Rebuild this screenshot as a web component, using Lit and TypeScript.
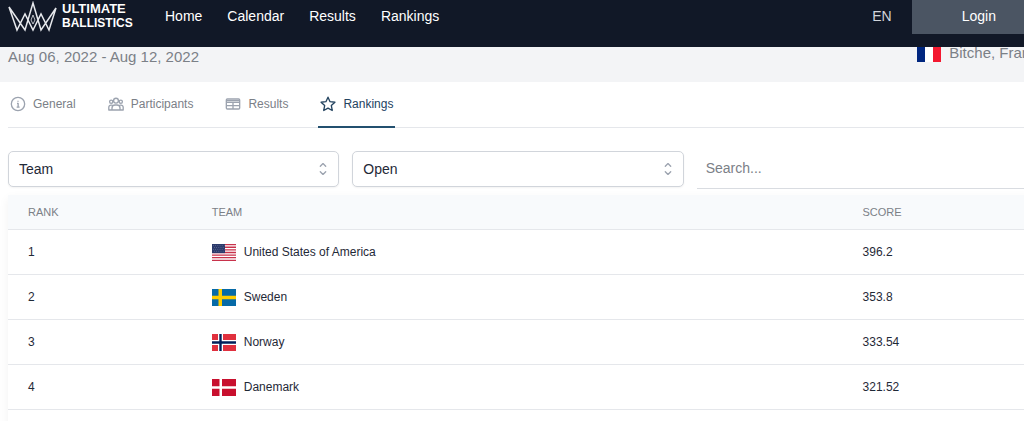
import { LitElement, html, css, svg } from "lit";
import { customElement, property } from "lit/decorators.js";

type Row = { rank: number; code: string; team: string; score: string };

const ROWS: Row[] = [
  { rank: 1, code: "us", team: "United States of America", score: "396.2" },
  { rank: 2, code: "se", team: "Sweden", score: "353.8" },
  { rank: 3, code: "no", team: "Norway", score: "333.54" },
  { rank: 4, code: "dk", team: "Danemark", score: "321.52" },
];

const FLAGS: Record<string, unknown> = {
  fr: svg`<path fill="#fff" d="M0 0h24v17H0z"/><path fill="#00267f" d="M0 0h8v17H0z"/><path fill="#f31830" d="M16 0h8v17h-8z"/>`,
  us: svg`<path fill="#fff" d="M0 0h24v17H0z"/>
    <path stroke="#c8324b" stroke-width="1.3" d="M0 .65h24M0 3.27h24M0 5.88h24M0 8.5h24M0 11.1h24M0 13.7h24M0 16.35h24"/>
    <path fill="#2b3a6b" d="M0 0h13v9.1H0z"/>
    <path stroke="#8f99b8" stroke-width=".5" stroke-dasharray=".8 1.4" d="M1 1.6h11.5M2 3.5h10M1 5.4h11.5M2 7.3h10"/>`,
  se: svg`<path fill="#066aa7" d="M0 0h24v17H0z"/><path fill="#fecc00" d="M6.5 0h3.5v17H6.5zM0 6.8h24v3.4H0z"/>`,
  no: svg`<path fill="#e0303e" d="M0 0h24v17H0z"/><path fill="#fff" d="M6 0h5v17H6zM0 6h24v5H0z"/><path fill="#00205b" d="M7.3 0h2.4v17H7.3zM0 7.3h24v2.4H0z"/>`,
  dk: svg`<path fill="#c8102e" d="M0 0h24v17H0z"/><path fill="#fff" d="M7.5 0h2.5v17H7.5zM0 7.2h24v2.5H0z"/>`,
};

const ICONS: Record<string, unknown> = {
  General: svg`<circle cx="12" cy="12" r="10"/><path d="M10.5 11h1.7v5.5M10 16.6h4.4M12 7v1.6"/>`,
  Participants: svg`<circle cx="12" cy="7" r="3.6"/><circle cx="4.8" cy="8.5" r="2.4"/><circle cx="19.2" cy="8.5" r="2.4"/>
    <path d="M6 21v-3.2a4.5 4.5 0 0 1 4.5-4.3h3a4.5 4.5 0 0 1 4.5 4.3V21zM6 21H1.2v-4a3.2 3.2 0 0 1 3.2-3.2h2.4M18 21h4.8v-4a3.2 3.2 0 0 0-3.2-3.2h-2.4"/>`,
  Results: svg`<rect x="2" y="4.5" width="20" height="15" rx="1.5"/><path d="M2 9.5h20M2 14.5h20M12 9.5v10M2 7h20"/>`,
  Rankings: svg`<path d="m12 1.8 3.1 6.7 7.3.9-5.4 5 1.4 7.3-6.4-3.6-6.4 3.6L7 14.4l-5.4-5 7.3-.9z"/>`,
};

@customElement("country-flag")
export class CountryFlag extends LitElement {
  @property() code = "";

  static styles = css`
    :host { display: block; flex: none; width: 24px; height: 17px; }
    .flag { display: block; width: 100%; height: 100%; }
  `;

  render() {
    return html`<svg class="flag" viewBox="0 0 24 17" preserveAspectRatio="none" aria-hidden="true">${FLAGS[this.code]}</svg>`;
  }
}

@customElement("app-root")
export class AppRoot extends LitElement {
  static styles = css`
    :host {
      display: block;
      min-height: 100vh;
      overflow: hidden;
      background: #fff;
      color: #1f2937;
      font-family: "Liberation Sans", Arial, sans-serif;
      font-size: 12px;
    }
    * { box-sizing: border-box; }
    a { color: inherit; text-decoration: none; }
    .page { width: calc(100% + 22px); }

    .header {
      position: relative;
      z-index: 1;
      display: flex;
      align-items: flex-start;
      padding: 0 0 13px 8px;
      background: #111827;
      color: #fff;
      font-size: 14px;
      line-height: 32px;
    }
    .brand {
      display: flex;
      gap: 4px;
      width: 157px;
      padding-top: 1px;
      font-weight: bold;
      font-size: 12px;
      line-height: 15px;
    }
    .brand-top { font-size: 13px; }
    .brand-name { display: flex; flex-direction: column; }
    .crown { width: 50px; height: 32px; }
    .nav { display: flex; flex: 1; gap: 25px; }
    .lang {
      padding: 0 20px;
      border: 0;
      background: none;
      color: #d1d5db;
      font: inherit;
    }
    .login {
      padding: 0 50px 2px;
      border: 0;
      background: #4b5563;
      color: #fff;
      font: inherit;
    }

    .event {
      display: flex;
      justify-content: space-between;
      align-items: flex-start;
      margin-top: -8px;
      padding: 5px 0 12px 8px;
      background: #f3f4f6;
      color: #7b8087;
      font-size: 15px;
      line-height: 18px;
    }
    .date { padding: 4px 0; }
    .place { display: flex; align-items: center; gap: 8px; }

    .tabs {
      display: flex;
      gap: 28px;
      margin-left: 8px;
      border-bottom: 1px solid #e5e7eb;
      color: #7b8087;
    }
    .tab {
      display: flex;
      align-items: center;
      gap: 7px;
      margin-bottom: -1px;
      padding: 14px 2px;
      border-bottom: 2px solid transparent;
      line-height: 16px;
    }
    .tab-active { border-color: #23506f; color: #23435f; }
    .icon {
      width: 16px;
      height: 16px;
      fill: none;
      stroke: #9ca3af;
      stroke-width: 2;
      stroke-linejoin: round;
    }
    .tab-active .icon { stroke: #23435f; }

    .filters {
      display: grid;
      grid-template-columns: repeat(3, 1fr);
      align-items: start;
      gap: 13px;
      padding: 23px 18px 6px 8px;
    }
    .picker { position: relative; display: block; }
    .select {
      display: block;
      width: 100%;
      height: 36px;
      padding: 0 32px 0 10px;
      border: 1px solid #d1d5db;
      border-radius: 5px;
      background: #fff;
      box-shadow: 0 1px 2px rgba(0, 0, 0, 0.05);
      color: #1f2937;
      font: inherit;
      font-size: 14px;
      appearance: none;
    }
    .chevrons {
      position: absolute;
      top: 9px;
      right: 7px;
      width: 18px;
      height: 18px;
      fill: none;
      stroke: #9ca3af;
      stroke-width: 1.5;
      stroke-linecap: round;
      stroke-linejoin: round;
      pointer-events: none;
    }
    .search {
      display: block;
      width: 100%;
      height: 38px;
      padding: 0 9px 4px;
      border: 0;
      border-bottom: 1px solid #d9dce1;
      border-radius: 0;
      background: none;
      color: #1f2937;
      font: inherit;
      font-size: 14px;
    }
    .search::placeholder { color: #7b8087; opacity: 1; }

    .card {
      margin-left: 8px;
      padding-bottom: 16px;
      background: #fff;
      box-shadow: 0 4px 10px rgba(0, 0, 0, 0.06);
    }
    .table {
      width: 100%;
      table-layout: fixed;
      border-spacing: 0;
      line-height: 18px;
    }
    .cell {
      height: 45px;
      padding: 0 20px;
      border-bottom: 1px solid #e5e7eb;
      text-align: left;
    }
    .head {
      height: 35px;
      background: #f8fafc;
      color: #7b8087;
      font-size: 11px;
      font-weight: 500;
    }
    .col-rank { width: 17.7%; }
    .col-team { width: 62.7%; }
    .team { display: flex; align-items: center; gap: 8px; }
  `;

  private picker(label: string, value: string) {
    return html`
      <label class="picker">
        <select class="select" aria-label=${label}><option>${value}</option></select>
        <svg class="chevrons" viewBox="0 0 20 20" aria-hidden="true"><path d="M7 7l3-3 3 3m0 6l-3 3-3-3" /></svg>
      </label>
    `;
  }

  render() {
    return html`
      <div class="page">
        <header class="header">
          <a class="brand" href="#">
            <svg class="crown" viewBox="8 1 50 32" fill="none" stroke="#e5e7eb" stroke-width="1.5" aria-hidden="true">
              <path d="M9 7l8 23 8-16 8 16 8-16 8 16 7-22-15 22-8-27-8 27z" />
              <path d="M33 15l-2 5 2 4 2-4z" stroke-width=".8" />
            </svg>
            <span class="brand-name"><span class="brand-top">ULTIMATE</span><span>BALLISTICS</span></span>
          </a>
          <nav class="nav">
            ${["Home", "Calendar", "Results", "Rankings"].map((t) => html`<a href="#">${t}</a>`)}
          </nav>
          <button class="lang">EN</button>
          <button class="login">Login</button>
        </header>

        <section class="event">
          <span class="date">Aug 06, 2022 - Aug 12, 2022</span>
          <span class="place"><country-flag code="fr"></country-flag>Bitche, France</span>
        </section>

        <nav class="tabs">
          ${Object.keys(ICONS).map(
            (t) => html`<a class="tab ${t === "Rankings" ? "tab-active" : ""}" href="#">
              <svg class="icon" viewBox="0 0 24 24" aria-hidden="true">${ICONS[t]}</svg>${t}</a>`
          )}
        </nav>

        <div class="filters">
          ${this.picker("Type", "Team")} ${this.picker("Category", "Open")}
          <input class="search" type="search" placeholder="Search..." aria-label="Search" />
        </div>

        <div class="card">
          <table class="table">
            <thead>
              <tr>
                <th class="cell head col-rank">RANK</th>
                <th class="cell head col-team">TEAM</th>
                <th class="cell head">SCORE</th>
              </tr>
            </thead>
            <tbody>
              ${ROWS.map(
                (r) => html`<tr>
                  <td class="cell">${r.rank}</td>
                  <td class="cell"><span class="team"><country-flag code=${r.code}></country-flag>${r.team}</span></td>
                  <td class="cell">${r.score}</td>
                </tr>`
              )}
            </tbody>
          </table>
        </div>
      </div>
    `;
  }
}
